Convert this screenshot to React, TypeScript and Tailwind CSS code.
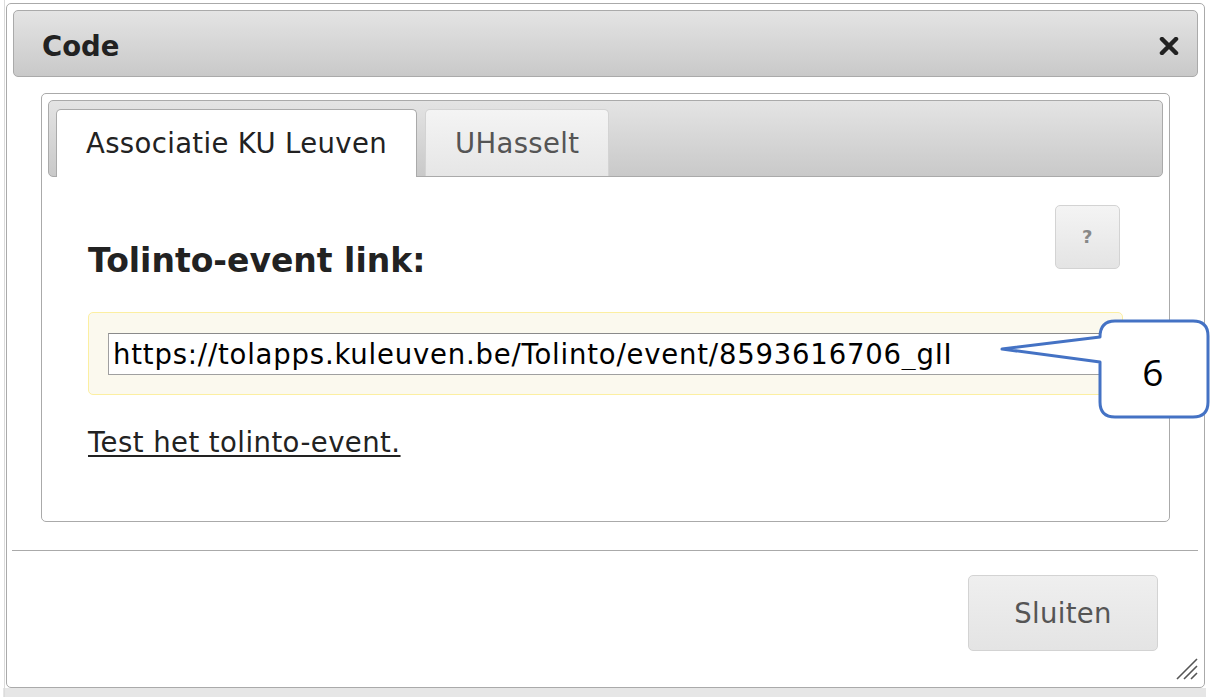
import { useState } from "react"

const FONT = { fontFamily: '"DejaVu Sans", Verdana, sans-serif' }

function CloseIcon() {
  return (
    <svg width="20" height="18" viewBox="0 0 20 18">
      <path d="M3 2 L17 16 M17 2 L3 16" stroke="#222" strokeWidth="4.5" strokeLinecap="round" />
    </svg>
  )
}

function ResizeGrip() {
  return (
    <svg width="22" height="22" viewBox="0 0 22 22" className="absolute right-[6px] bottom-[7px]">
      <path d="M1 21 L21 1 M8 21 L21 8 M15 21 L21 15" stroke="#555" strokeWidth="1.6" />
    </svg>
  )
}

function Callout() {
  return (
    <svg
      className="absolute left-0 top-0 pointer-events-none"
      width="1214"
      height="697"
      viewBox="0 0 1214 697"
    >
      <path
        d="M1115 321 L1193 321 Q1208 321 1208 336 L1208 402 Q1208 417 1193 417 L1115 417 Q1100 417 1100 402 L1100 362 L1002 349 L1100 337 Q1100 321 1115 321 Z"
        fill="#fff"
        stroke="#4472c4"
        strokeWidth="3"
        strokeLinejoin="round"
      />
      <text x="1153" y="386" textAnchor="middle" fontSize="37" fill="#000" style={{ fontFamily: '"Open Sans", Lato, sans-serif' }}>
        6
      </text>
    </svg>
  )
}

function App() {
  const [tab, setTab] = useState(0)
  const tabs = ["Associatie KU Leuven", "UHasselt"]

  return (
    <div className="relative w-[1214px] h-[697px] bg-white overflow-hidden text-[27.5px] leading-[32px] tracking-[0.35px] text-[#222]" style={FONT}>
      <div className="absolute left-[4px] top-0 h-full w-px bg-[#dcdcdc]" />

      <div className="relative ml-[6px] mt-[3px] w-[1199px] h-[685px] border border-[#aaa] rounded-[5px] bg-white flex flex-col">
        {/* title bar */}
        <div className="ml-[6px] mr-[6px] mt-[6px] h-[67px] rounded-[5px] border border-[#aaa] bg-linear-to-b from-[#e4e4e4] to-[#c9c9c9] flex items-start justify-between pl-[28px] pr-[18px]">
          <span className="pt-[19px] font-bold tracking-normal">Code</span>
          <button className="mt-[26px]">
            <CloseIcon />
          </button>
        </div>

        {/* tabs */}
        <div className="mt-[16px] mx-[34px] h-[429px] border border-[#aaa] rounded-[5px] p-[6px] flex flex-col">
          <div className="h-[77px] shrink-0 border border-[#aaa] rounded-[5px] bg-linear-to-b from-[#e4e4e4] to-[#c9c9c9] flex items-end gap-[8px] pl-[7px]">
            {tabs.map((t, i) => (
              <button
                key={t}
                onClick={() => setTab(i)}
                className={`${tab === i ? "h-[68px] -mb-px bg-white border-[#aaa] text-[#222]" : "h-[67px] bg-linear-to-b from-[#f4f4f4] to-[#e6e6e6] border-[#d3d3d3] text-[#555]"} border border-b-0 rounded-t-[5px] px-[29px] pt-[17px] flex items-start`}
              >
                {t}
              </button>
            ))}
          </div>

          <div className="px-[40px]">
            <div className="flex items-start justify-between mt-[28px]">
              <h3 className="mt-[37px] text-[33px] leading-[38px] font-bold tracking-normal">Tolinto-event link:</h3>
              <button className="mr-[3px] w-[65px] h-[64px] rounded-[5px] border border-[#d3d3d3] bg-linear-to-b from-[#f4f4f4] to-[#e4e4e4] text-[#888] text-[18px] font-bold">
                ?
              </button>
            </div>

            <div className="mt-[32px] h-[83px] border border-[#fcefa1] bg-[#fbf9ee] rounded-[5px] flex items-center px-[19px]">
              <input
                readOnly
                value="https://tolapps.kuleuven.be/Tolinto/event/8593616706_gII"
                className="w-full h-[42px] border border-[#a0a0a0] border-t-[#8a8a8a] bg-white px-[4px] text-black outline-none tracking-[0.8px]"
                style={FONT}
              />
            </div>

            <a href="#" className="block mt-[31px] underline underline-offset-[3px] text-[#222] tracking-[0.45px]">
              Test het tolinto-event.
            </a>
          </div>
        </div>

        {/* separator + buttons */}
        <div className="mt-[28px] ml-[5px] mr-[6px] h-px bg-[#aaa]" />
        <div className="flex justify-end mt-[24px] mr-[46px]">
          <button className="w-[190px] h-[76px] rounded-[5px] border border-[#d3d3d3] bg-linear-to-b from-[#efefef] to-[#e4e4e4] text-[#555]">
            Sluiten
          </button>
        </div>
        <ResizeGrip />
      </div>

      <div className="ml-[3px] w-[1203px] h-[9px] bg-[#e6e6e6]" />
      <Callout />
    </div>
  )
}

export default App
